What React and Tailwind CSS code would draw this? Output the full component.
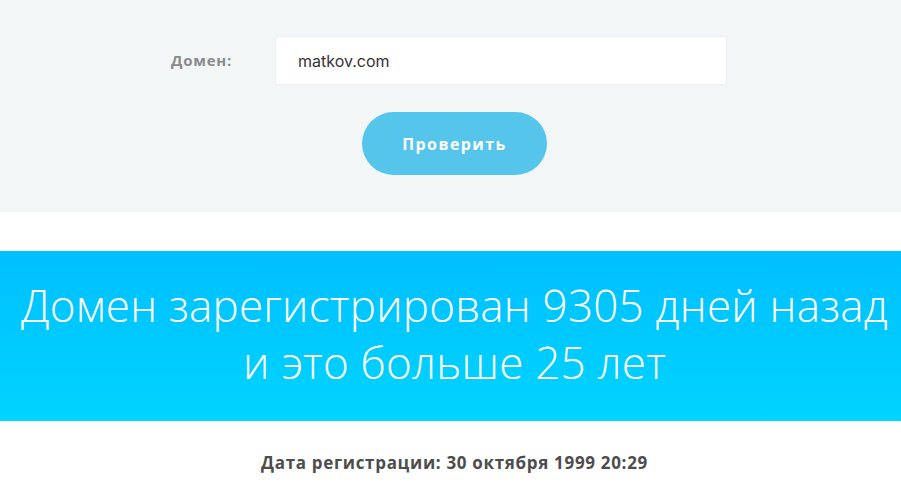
import React from 'react';

export default function App() {
  return (
    <div className="min-h-[495px] bg-white" style={{ fontFamily: '"Inter", "Open Sans", sans-serif' }}>
      {/* форма проверки */}
      <section className="bg-[#f3f6f7] h-[212px] pt-9">
        <div className="flex items-center">
          <label className="w-[233px] pl-[171px] text-[15px] font-bold text-[#8a8a8a] tracking-[0.05em]" style={{ fontFamily: '"Open Sans", sans-serif' }}>Домен:</label>
          <div className="ml-[42px] w-[452px] h-[49px] bg-white rounded-[3px] border border-[#eceff0] flex items-center pl-[22px] text-[16px] text-[#333]">
            matkov.com
          </div>
        </div>
        <div className="flex justify-center mt-[27px] pl-[8px]">
          <button className="w-[185px] h-[63px] rounded-full bg-[#55c5ec] text-white text-[16px] font-bold tracking-[0.09em]" style={{ fontFamily: '"Open Sans", sans-serif' }}>
            Проверить
          </button>
        </div>
      </section>

      <div className="h-[39px]" />

      {/* результат */}
      <section className="h-[170px] bg-gradient-to-b from-[#00bfff] to-[#00d4ff] flex flex-col items-center justify-center text-white">
        <p className="text-[44px] leading-[57px] font-light text-center pl-[8px] tracking-[0.005em] -mt-[4px]" style={{ fontFamily: '"Open Sans", sans-serif' }}>
          Домен зарегистрирован 9305 дней назад
          <br />
          и это больше 25 лет
        </p>
      </section>

      <p className="text-center mt-[29px] text-[17px] font-bold text-[#4d4d4d] tracking-[0.04em] pl-[8px]" style={{ fontFamily: '"Open Sans", sans-serif' }}>
        Дата регистрации: 30 октября 1999 20:29
      </p>
    </div>
  );
}
